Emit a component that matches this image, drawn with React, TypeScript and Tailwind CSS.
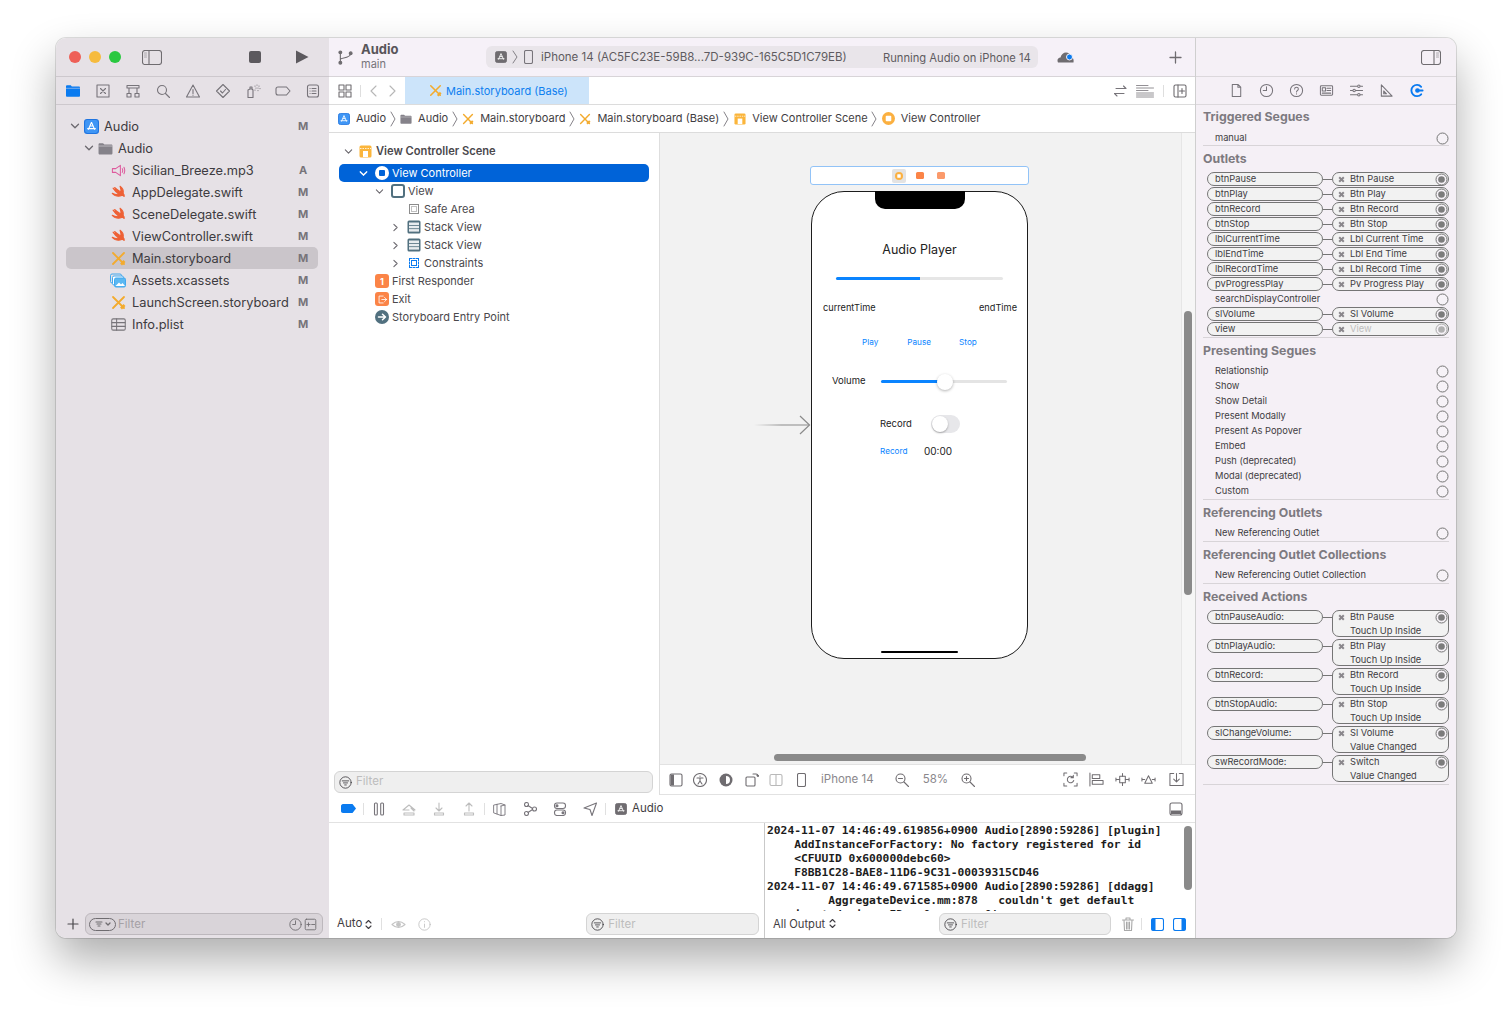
import React from 'react'

type P = { s?: number; w?: number; h?: number; c?: string; sw?: number; children?: React.ReactNode }

// stroke icon wrapper, 16 unit box unless vb is passed
const Ic = ({ s = 16, w, h, c = '#77747a', sw = 1.1, vb = '0 0 16 16', children }: P & { vb?: string }) => (
    <svg width={w ?? s} height={h ?? s} viewBox={vb} fill="none" stroke={c} strokeWidth={sw} strokeLinecap="round" strokeLinejoin="round" className="shrink-0">
        {children}
    </svg>
)

const AppIcon = ({ s = 14, gray = false }: { s?: number; gray?: boolean }) => (
    <svg width={s} height={s} viewBox="0 0 14 14" className="shrink-0">
        <rect x="0.5" y="0.5" width="13" height="13" rx="2.5" fill={gray ? '#6f6c70' : '#3f96f5'} stroke={gray ? '#6f6c70' : '#1f74e0'} />
        <path d="M7 3 L4 10 M7 3 L10 10 M3 9 H11 M5.5 6.5 H8.5" stroke="#fff" strokeWidth="1" fill="none" />
    </svg>
)
const Xib = ({ s = 15 }: { s?: number }) => (
    <svg width={s} height={s} viewBox="0 0 15 15" className="shrink-0">
        <path d="M2 2 L13 13 M13 2 L2 13" stroke="#f3ab2e" strokeWidth="1.8" strokeLinecap="round" />
        <path d="M10 13.5 L13.5 10" stroke="#f3ab2e" strokeWidth="2.6" />
    </svg>
)
const Folder = ({ s = 14, c = '#85828a' }: { s?: number; c?: string }) => (
    <svg width={s} height={s} viewBox="0 0 14 14" className="shrink-0">
        <path d="M0.5 3.2c0-.7.5-1.2 1.2-1.2h3l1.2 1.2h6.400c.7 0 1.200.5 1.200 1.200v7c0 .7-.5 1.200-1.200 1.200H1.700c-.7 0-1.200-.5-1.200-1.200z" fill={c} />
        <path d="M0.500 4.700h13" stroke="#e8e4e8" strokeWidth=".5" />
    </svg>
)
const Chev = ({ open = false, c = '#6d6a70', s = 10, sw = 1.3 }: { open?: boolean; c?: string; s?: number; sw?: number }) => (
    <Ic s={s} c={c} sw={sw} vb="0 0 10 10">
        {open ? <path d="M1.500 3.200 L5 6.800 L8.500 3.200" /> : <path d="M3.200 1.500 L6.800 5 L3.200 8.500" />}
    </Ic>
)
const Crumb = () => (
    <Ic w={6} h={18} c="#77747a" sw={0.9} vb="0 0 6 18">
        <path d="M1 2 L5 9 L1 16" />
    </Ic>
)
// swift bird, no tile behind it
const Swift = () => (
    <svg width={15} height={15} viewBox="0 0 24 24" className="shrink-0">
        <path d="M14.500 2C18.500 5 20.500 9.500 19.500 13.500C20.800 15 21.500 16.800 21 18.500C20 16.800 18.500 16.300 17 16.800C14 18.300 10 18.300 6.500 16.800C4.800 16 3.300 14.800 2 13.300C5.500 15.300 9.500 15.500 12.300 14C8.800 11.800 5.500 8.500 3.300 5C6.500 8 9.500 10 12 11.500C9.800 9.500 7.500 6.800 5.800 4C9 7 12.500 9.500 15.500 11.300C16.200 8.800 15.800 5.500 14.500 2Z" fill="#ee6136" stroke="#ee6136" strokeWidth="1.700" strokeLinejoin="round" />
    </svg>
)
const SceneIcon = ({ s = 13 }: { s?: number }) => (
    <svg width={s} height={s} viewBox="0 0 13 13" className="shrink-0">
        <rect x="0.500" y="0.500" width="12" height="12" rx="1.500" fill="#fbb53b" />
        <rect x="4" y="6" width="5" height="6" fill="#fff" />
        <path d="M1 3.500 H12" stroke="#fff" strokeWidth=".8" strokeDasharray="1.500 1" />
    </svg>
)
const VcRing = ({ s = 14, c = '#fbb040', inner = '#fff' }: { s?: number; c?: string; inner?: string }) => (
    <svg width={s} height={s} viewBox="0 0 14 14" className="shrink-0">
        <circle cx="7" cy="7" r="7" fill={c} />
        <rect x="4" y="4" width="6" height="6" rx="1" fill={inner} />
    </svg>
)
const StackIc = () => (
    <svg width={14} height={14} viewBox="0 0 14 14" className="shrink-0">
        <rect x="0.500" y="0.500" width="13" height="13" rx="1.500" fill="#51707f" />
        <rect x="2" y="2.500" width="10" height="2.500" fill="#e8ecef" />
        <rect x="2" y="5.800" width="10" height="2.500" fill="#e8ecef" />
        <rect x="2" y="9.100" width="10" height="2.500" fill="#e8ecef" />
    </svg>
)
const OrangeBox = ({ kind }: { kind: 'one' | 'exit' }) => (
    <span className="w-[14px] h-[14px] rounded-[3px] bg-[#fb8447] flex items-center justify-center shrink-0 text-white text-[9px] font-bold leading-none">
        {kind === 'one' ? '1' : (
            <Ic s={11} c="#fff" sw={1.200}>
                <path d="M9 3 H3 V13 H9 M7 8 H14 M11 5 L14 8 L11 11" />
            </Ic>
        )}
    </span>
)
const FilterGlyph = ({ s = 13, c = '#3a383c' }: { s?: number; c?: string }) => (
    <Ic s={s} c={c} sw={1}>
        <circle cx="8" cy="8" r="7" />
        <path d="M4 6 H12 M5.500 8.500 H10.500 M7 11 H9" />
    </Ic>
)

const navIcons = [
    <svg key="f" width={14} height={12} viewBox="0 0 14 12"><path d="M0 1.500C0 .7.500.2 1.200.2h3.600l1 1.300h7c.7 0 1.200.5 1.200 1.200v8c0 .7-.5 1.100-1.200 1.100H1.200C.5 11.800 0 11.400 0 10.700z" fill="#0a7bf0" /><path d="M0 3.300H14" stroke="#e6e1e6" strokeWidth=".5" /></svg>,
    <Ic key="x"><rect x="2" y="2" width="12" height="12" /><path d="M5.500 5.500 L10.500 10.500 M10.500 5.500 L5.500 10.500" /></Ic>,
    <Ic key="h"><path d="M2 2.500 H14 V5 H2 Z M4 5 V10 M12 5 V10" /><rect x="2" y="10.500" width="4" height="3.500" /><rect x="10" y="10.500" width="4" height="3.500" /></Ic>,
    <Ic key="s"><circle cx="7" cy="7" r="4.500" /><path d="M10.500 10.500 L14.500 14.500" /></Ic>,
    <Ic key="w"><path d="M8 2 L14.500 14 H1.500 Z M8 6.500 V10.500 M8 12 V12.300" /></Ic>,
    <Ic key="d"><path d="M8 1.500 L14.500 8 L8 14.500 L1.500 8 Z M5.500 8 L7.500 10 L10.500 6.500" /></Ic>,
    <Ic key="b"><path d="M3 7 L5 6 H7 L8 7 V14.500 H3 Z M5 6 V4 H7 V6" /><path d="M10 3 V3.100 M12 2 V2.100 M14 3 V3.100 M11 5 V5.100 M13 5 V5.100 M15 5.500 V5.600 M10 7 V7.100 M13 7.500 V7.600" /></Ic>,
    <Ic key="t"><path d="M3 4 H11.500 L15 8 L11.500 12 H3 C1.500 12 1 11 1 10 V6 C1 5 1.500 4 3 4 Z" /></Ic>,
    <Ic key="l"><rect x="2.500" y="2" width="11" height="12" rx="2" /><path d="M5 5.500 H5.100 M5 8 H5.100 M5 10.500 H5.100 M7 5.500 H11 M7 8 H11 M7 10.500 H11" /></Ic>,
]

const files: { name: string; st: string; ic: React.ReactNode; sel?: boolean }[] = [
    { name: 'Sicilian_Breeze.mp3', st: 'A', ic: <Ic s={15} c="#de5a9d"><path d="M1.500 6 H5 L10 2.500 V13.500 L5 10 H1.500 Z M12 6 Q13 8 12 10 M13.800 4.500 Q15.500 8 13.800 11.500" /></Ic> },
    { name: 'AppDelegate.swift', st: 'M', ic: <Swift /> },
    { name: 'SceneDelegate.swift', st: 'M', ic: <Swift /> },
    { name: 'ViewController.swift', st: 'M', ic: <Swift /> },
    { name: 'Main.storyboard', st: 'M', ic: <Xib />, sel: true },
    { name: 'Assets.xcassets', st: 'M', ic: <svg width={16} height={15} viewBox="0 0 16 15" className="shrink-0"><rect x="0.500" y="1" width="11" height="9" rx="1.500" fill="none" stroke="#41a8ee" /><rect x="2.500" y="3" width="11" height="9" rx="1.500" fill="#fff" stroke="#41a8ee" /><rect x="4.500" y="5" width="11" height="9" rx="1.500" fill="#5bb8f2" stroke="#41a8ee" /><path d="M5.500 13 L9 9.500 L11 11.500 L12.500 10 L15 13 Z" fill="#fff" /></svg> },
    { name: 'LaunchScreen.storyboard', st: 'M', ic: <Xib /> },
    { name: 'Info.plist', st: 'M', ic: <Ic s={15} c="#77747a"><rect x="0.800" y="2" width="14.400" height="12" rx="1.500" /><path d="M1 6 H15 M1 10 H15 M6 2 V14" /></Ic> },
]

const Sidebar = () => (
    <div className="w-[273px] shrink-0 bg-[#e6e1e6] flex flex-col">
        <div className="h-[39px] border-b border-[#cdc8cd] flex items-center pl-[13px] shrink-0">
            <span className="w-3 h-3 rounded-full bg-[#ee5f57]" />
            <span className="w-3 h-3 rounded-full bg-[#f6bb3e] ml-2" />
            <span className="w-3 h-3 rounded-full bg-[#2ac840] ml-2" />
            <span className="ml-[21px]">
                <Ic w={20} h={15} vb="0 0 20 15" c="#6f6c70">
                    <rect x="0.500" y="0.500" width="19" height="14" rx="2.500" />
                    <path d="M7 .5 V14.500" />
                    <path d="M2.500 3 H4.500 M2.500 5 H4.500 M2.500 7 H4.500" stroke="#a9a6aa" />
                </Ic>
            </span>
            <span className="w-3 h-3 bg-[#5c595e] rounded-[2px] ml-[87px]" />
            <svg width={14} height={14} viewBox="0 0 14 14" className="ml-[34px]"><path d="M1 .5 L13.500 7 L1 13.500 Z" fill="#5c595e" /></svg>
        </div>
        <div className="h-[28px] border-b border-[#cdc8cd] flex items-center shrink-0 pl-[2px]">
            {navIcons.map((n, i) => (
                <span key={i} className="w-[30px] flex justify-center">{n}</span>
            ))}
        </div>
        <div className="pt-[10px] pl-[10px] pr-[11px] flex-1 text-[12.800px] text-[#3d3b40]">
            <div className="h-[22px] flex items-center pl-[4px]">
                <Chev open s={10} />
                <span className="ml-[4px]"><AppIcon s={15} /></span>
                <span className="ml-[5px] flex-1 pt-[2px]">Audio</span>
                <span className="font-bold text-[11px] text-[#77747a] w-[14px] mr-[8px] text-center pt-[1px]">M</span>
            </div>
            <div className="h-[22px] flex items-center pl-[18px]">
                <Chev open s={10} />
                <span className="ml-[4px]"><Folder s={15} /></span>
                <span className="ml-[5px] flex-1 pt-[2px]">Audio</span>
            </div>
            {files.map(f => (
                <div key={f.name} className={`h-[22px] flex items-center pl-[44px] rounded-[5px] ${f.sel ? 'bg-[#cac5ca]' : ''}`}>
                    <span className="w-[16px] flex justify-center">{f.ic}</span>
                    <span className="ml-[6px] flex-1 whitespace-nowrap pt-[2px]">{f.name}</span>
                    <span className="font-bold text-[11px] text-[#77747a] w-[14px] mr-[8px] text-center">{f.st}</span>
                </div>
            ))}
        </div>
        <div className="h-[27px] flex items-center pl-[11px] pb-[1px] shrink-0">
            <Ic s={12} c="#4a484c" sw={1.200} vb="0 0 12 12"><path d="M6 1 V11 M1 6 H11" /></Ic>
            <div className="ml-[6px] w-[238px] h-[22px] bg-[#d9d4d9] border border-[#bdb8bd] rounded-[6px] flex items-center pl-[3px] pr-[5px]">
                <span className="w-[27px] h-[13px] border border-[#6f6c70] rounded-full flex items-center justify-center gap-[2px]">
                    <Ic s={8} c="#6f6c70" vb="0 0 8 8"><path d="M1 2 H7 M2 4 H6 M3 6 H5" /></Ic>
                    <Ic s={6} c="#6f6c70" sw={1.300} vb="0 0 6 6"><path d="M1 2 L3 4 L5 2" /></Ic>
                </span>
                <span className="ml-[2px] pt-[2px] flex-1 text-[11.500px] text-[#a5a1a6]">Filter</span>
                <Ic s={13} c="#6f6c70"><circle cx="8" cy="8" r="7" /><path d="M8 3.500 V8 H4.500" /></Ic>
                <span className="ml-[2px]"><Ic s={13} c="#6f6c70"><rect x="1.500" y="1.500" width="13" height="13" rx="1.500" /><path d="M3.500 8 H7.500 M5.500 6 V10 M9.500 8 H13" /></Ic></span>
            </div>
        </div>
    </div>
)

const TopBar = () => (
    <div className="h-[39px] bg-[#f6f1f8] border-b border-[#d8d4d8] flex items-center shrink-0 pl-[9px]">
        <Ic s={15} c="#6f6c70" sw={1.200}>
            <circle cx="2.500" cy="2.500" r="1.500" fill="#6f6c70" />
            <circle cx="2.500" cy="13.500" r="1.500" fill="#6f6c70" />
            <circle cx="13.500" cy="3.500" r="1.500" fill="#6f6c70" />
            <path d="M2.500 3 V13 M2.500 10 C3 8 13 9 13.500 4" />
        </Ic>
        <div className="ml-[8px] w-[125px] leading-none">
            <div className="text-[13px] font-bold text-[#58555a] leading-[14px]">Audio</div>
            <div className="text-[11px] text-[#77747a] leading-[16px]">main</div>
        </div>
        <div className="w-[552px] h-[22px] rounded-[6px] bg-[#e9e5ea] flex items-center pl-[9px] text-[11.500px] text-[#5e5b60] whitespace-nowrap">
            <AppIcon s={12} gray />
            <span className="ml-[5px]"><Ic w={6} h={14} c="#77747a" sw={0.900} vb="0 0 6 14"><path d="M1 1 L5 7 L1 13" /></Ic></span>
            <span className="ml-[6px]"><Ic w={9} h={14} c="#77747a" vb="0 0 9 14"><rect x="0.500" y="0.500" width="8" height="13" rx="1.500" /></Ic></span>
            <span className="ml-[8px] w-[342px] pt-[2px]">iPhone 14 (AC5FC23E-59B8...7D-939C-165C5D1C79EB)</span>
            <span className="pt-[2px] text-[11.200px]">Running Audio on iPhone 14</span>
        </div>
        <svg width={17} height={11} viewBox="0 0 17 11" className="ml-[19px]">
            <path d="M1 10.500C-.3 8 1 5.500 3.500 5.500 4 2.500 6.500 .5 9 .5c2.500 0 4.500 1.500 5 4.500 2 .5 3 2 2.500 5.500z" fill="#6f6c70" />
            <circle cx="12.500" cy="5" r="3" fill="#0a7bf0" stroke="#f6f1f8" />
        </svg>
        <span className="ml-[95px]"><Ic s={13} c="#6f6c70" sw={1.300} vb="0 0 13 13"><path d="M6.500 1 V12 M1 6.500 H12" /></Ic></span>
    </div>
)

const TabBar = () => (
    <div className="h-[28px] border-b border-[#dcdcdc] bg-white flex items-center shrink-0 pl-[9px]">
        <Ic s={14} c="#6f6c70" vb="0 0 14 14">
            <rect x="1" y="1" width="5" height="5" /><rect x="8" y="1" width="5" height="5" /><rect x="1" y="8" width="5" height="5" /><rect x="8" y="8" width="5" height="5" />
        </Ic>
        <span className="w-px h-[12px] bg-[#dedede] ml-[8px]" />
        <span className="ml-[7px]"><Ic s={12} c="#b7b7b7" vb="0 0 12 12"><path d="M8 1 L3 6 L8 11" /></Ic></span>
        <span className="ml-[6px]"><Ic s={12} c="#b7b7b7" vb="0 0 12 12"><path d="M4 1 L9 6 L4 11" /></Ic></span>
        <div className="ml-[7px] w-[184px] h-full bg-[#cce4fa] flex items-center pl-[24px] text-[11px] text-[#0d7ff0]">
            <Xib s={13} />
            <span className="ml-[4px] whitespace-nowrap pt-[2px]">Main.storyboard (Base)</span>
        </div>
        <div className="ml-auto flex items-center pr-[8px]">
            <Ic s={14} c="#77747a" vb="0 0 14 14"><path d="M3 4.500 H13 M10.500 2 L13 4.500 M1.500 9.500 H11 M1.500 9.500 L4 12" /></Ic>
            <span className="ml-[9px]"><Ic w={18} h={14} c="#77747a" sw={0.800} vb="0 0 18 14"><path d="M.5 1.500 H12 M.5 4 H17.500 M.5 6.500 H12 M.5 9 H17.500 M.5 11 H17.500 M.5 13 H17.500" /></Ic></span>
            <span className="w-px h-[12px] bg-[#dedede] ml-[9px]" />
            <span className="ml-[9px]"><Ic s={14} c="#6f6c70" vb="0 0 14 14"><rect x="1" y="1" width="12" height="12" rx="1.500" /><path d="M5 1 V13 M9 4.500 V9.500 M6.500 7 H11.500" /></Ic></span>
        </div>
    </div>
)

const BreadBar = () => (
    <div className="h-[28px] border-b border-[#dcdcdc] bg-white flex items-center shrink-0 pl-[9px] text-[11px] text-[#3f3d42] whitespace-nowrap">
        <AppIcon s={12} />
        <span className="ml-[6px]">Audio</span>
        <span className="ml-[4px]"><Crumb /></span>
        <span className="ml-[4px]"><Folder s={12} /></span>
        <span className="ml-[6px]">Audio</span>
        <span className="ml-[4px]"><Crumb /></span>
        <span className="ml-[4px]"><Xib s={12} /></span>
        <span className="ml-[6px]">Main.storyboard</span>
        <span className="ml-[4px]"><Crumb /></span>
        <span className="ml-[4px]"><Xib s={12} /></span>
        <span className="ml-[6px]">Main.storyboard (Base)</span>
        <span className="ml-[4px]"><Crumb /></span>
        <span className="ml-[5px]"><SceneIcon s={12} /></span>
        <span className="ml-[6px]">View Controller Scene</span>
        <span className="ml-[3px]"><Crumb /></span>
        <span className="ml-[5px]"><VcRing s={13} /></span>
        <span className="ml-[6px]">View Controller</span>
    </div>
)

const Row = ({ pl, chev, icon, text, sel }: { pl: number; chev?: 'open' | 'shut'; icon: React.ReactNode; text: string; sel?: boolean }) => (
    <div className={`h-[18px] flex items-center rounded-[5px] ${sel ? 'bg-[#0063d8] text-white' : ''}`}>
        <span style={{ width: pl }} className="shrink-0 flex justify-end pr-[4px]">
            {chev && <Chev open={chev === 'open'} s={9} c={sel ? '#fff' : '#6d6a70'} sw={sel ? 1.600 : 1.200} />}
        </span>
        <span className="w-[16px] ml-[2px] flex justify-center shrink-0">{icon}</span>
        <span className="ml-[2px] whitespace-nowrap">{text}</span>
    </div>
)

const Outline = () => (
    <div className="w-[331px] shrink-0 border-r border-[#dedede] flex flex-col bg-white">
        <div className="pt-[9px] pl-[10px] pr-[10px] text-[11px] text-[#4a484c] flex-1">
            <div className="h-[18px] flex items-center font-semibold">
                <span className="w-[9px] ml-[5px]"><Chev open s={9} /></span>
                <span className="ml-[6px]"><SceneIcon s={13} /></span>
                <span className="ml-[4px] whitespace-nowrap text-[11.150px]">View Controller Scene</span>
            </div>
            <div className="h-[4px]" />
            <Row pl={33} chev="open" icon={<VcRing s={14} c="#fff" inner="#0063d8" />} text="View Controller" sel />
            <Row pl={49} chev="open" icon={<span className="w-[14px] h-[14px] rounded-[3px] border-2 border-[#51707f] bg-white block" />} text="View" />
            <Row pl={65} icon={<span className="w-[10px] h-[10px] border border-[#8c8c8c] flex items-center justify-center"><span className="w-[6px] h-[6px] border border-[#c0c0c0] block" /></span>} text="Safe Area" />
            <Row pl={65} chev="shut" icon={<StackIc />} text="Stack View" />
            <Row pl={65} chev="shut" icon={<StackIc />} text="Stack View" />
            <Row pl={65} chev="shut" icon={<span className="w-[10px] h-[10px] border border-dashed border-[#0a7bf0] flex items-center justify-center"><span className="w-[6px] h-[6px] border border-[#0a7bf0] block" /></span>} text="Constraints" />
            <Row pl={33} icon={<OrangeBox kind="one" />} text="First Responder" />
            <Row pl={33} icon={<OrangeBox kind="exit" />} text="Exit" />
            <Row pl={33} icon={<span className="w-[14px] h-[14px] rounded-full bg-[#51707f] flex items-center justify-center"><Ic s={10} c="#fff" sw={1.500} vb="0 0 10 10"><path d="M1.500 5 H8.500 M5.500 2.200 L8.500 5 L5.500 7.800" /></Ic></span>} text="Storyboard Entry Point" />
        </div>
        <div className="h-[22px] ml-[5px] mr-[6px] mb-[2px] border border-[#d4d4d4] rounded-[6px] bg-[#efefef] flex items-center pl-[4px] shrink-0">
            <FilterGlyph />
            <span className="ml-[4px] text-[11.500px] text-[#bdbdbd]">Filter</span>
        </div>
    </div>
)

const Phone = () => (
    <div className="absolute left-[151px] top-[58px] w-[217px] h-[468px] rounded-[33px] border border-[#1c1c1c] bg-white flex flex-col text-[#222]">
        <div className="absolute left-[63px] -top-px w-[90px] h-[18px] bg-black rounded-b-[10px]" />
        <div className="absolute left-[69px] bottom-[5px] w-[77px] h-[2px] bg-black rounded-full" />
        <div className="mt-[50px] h-[16px] text-center text-[12.500px] leading-[16px]">Audio Player</div>
        <div className="mt-[19px] mx-[24px] h-[3px] bg-[#e6e6e6] rounded-full">
            <div className="w-1/2 h-full bg-[#0a84ff] rounded-l-full" />
        </div>
        <div className="mt-[22px] h-[12px] pl-[11px] pr-[10px] flex justify-between text-[9.200px] leading-[12px]">
            <span>currentTime</span>
            <span>endTime</span>
        </div>
        <div className="mt-[23px] h-[10px] text-[8.200px] leading-[10px] text-[#0a84ff] flex pl-[50px]">
            <span>Play</span>
            <span className="ml-[29px]">Pause</span>
            <span className="ml-[28px]">Stop</span>
        </div>
        <div className="mt-[28px] h-[12px] flex items-center pl-[20px] text-[9.500px]">
            <span className="w-[49px]">Volume</span>
            <div className="relative w-[126px] h-[3px] bg-[#e4e4e4] rounded-full">
                <div className="w-[57px] h-full bg-[#0a84ff] rounded-l-full" />
                <span className="absolute left-[56px] -top-[6px] w-[16px] h-[16px] rounded-full bg-white shadow-[0_1px_3px_rgba(0,0,0,0.3)]" />
            </div>
        </div>
        <div className="mt-[28px] h-[18px] flex items-center pl-[68px] text-[9.500px]">
            <span className="w-[51px]">Record</span>
            <span className="w-[29px] h-[18px] rounded-full bg-[#e7e7ea] p-[1px]">
                <span className="block w-[16px] h-[16px] rounded-full bg-white shadow-[0_1px_2px_rgba(0,0,0,0.3)]" />
            </span>
        </div>
        <div className="mt-[12px] h-[12px] flex items-center pl-[68px]">
            <span className="w-[44px] text-[8.200px] text-[#0a84ff]">Record</span>
            <span className="text-[10px]">00:00</span>
        </div>
    </div>
)

const Canvas = () => (
    <div className="flex-1 relative bg-[#f2f2f2] overflow-hidden">
        <div className="absolute right-0 top-0 bottom-0 w-[14px] bg-[#f6f6f6] border-l border-[#e6e6e6]" />
        <div className="absolute right-[3px] top-[178px] w-[8px] h-[284px] rounded-full bg-[#8a8a8a]" />
        <div className="absolute left-[114px] bottom-[3px] w-[312px] h-[7px] rounded-full bg-[#8a8a8a]" />
        <div className="absolute left-[150px] top-[33px] w-[219px] h-[19px] bg-white border border-[#92c3f7] rounded-[3px] flex items-center justify-center pr-[2px]">
            <span className="w-[14px] h-[14px] bg-[#e3e3e3] rounded-[2px] flex items-center justify-center"><VcRing s={8} /></span>
            <span className="ml-[10px] w-[8px] h-[7px] rounded-[1.500px] bg-[#fb8447]" />
            <span className="ml-[13px] w-[8px] h-[7px] rounded-[1.500px] bg-[#fb9a6b]" />
        </div>
        <Phone />
        <svg width={57} height={20} viewBox="0 0 57 20" className="absolute left-[94px] top-[282px]">
            <defs>
                <linearGradient id="arr" x1="0" x2="1" y1="0" y2="0">
                    <stop offset="0" stopColor="#8a8a8a" stopOpacity="0" />
                    <stop offset=".5" stopColor="#8a8a8a" />
                </linearGradient>
            </defs>
            <rect x="0" y="9.500" width="55" height="1" fill="url(#arr)" />
            <path d="M46 1 L55.500 10 L46 19" stroke="#8a8a8a" fill="none" strokeWidth="1.200" />
        </svg>
    </div>
)

const CanvasBar = () => (
    <div className="h-[31px] border-t border-b border-[#e2e2e2] bg-white flex items-center shrink-0 pl-[9px] text-[11.500px] text-[#8a878c]">
        <Ic s={14} c="#6f6c70" vb="0 0 14 14"><rect x="1" y="1" width="12" height="12" rx="1.500" /><rect x="1.500" y="1.500" width="3.500" height="11" fill="#6f6c70" stroke="none" /></Ic>
        <span className="ml-[10px]"><Ic s={14} c="#6f6c70" vb="0 0 14 14"><circle cx="7" cy="7" r="6.500" /><path d="M4 5 H10 M7 5 V8 M7 8 L5 11 M7 8 L9 11 M7 3 V3.200" /></Ic></span>
        <span className="ml-[12px]"><svg width={14} height={14} viewBox="0 0 14 14"><circle cx="7" cy="7" r="6.500" fill="#6f6c70" /><path d="M7 3 A4 4 0 0 1 7 11 Z" fill="#fff" /></svg></span>
        <span className="ml-[12px]"><Ic s={14} c="#6f6c70" vb="0 0 14 14"><rect x="1" y="4" width="9" height="9" rx="1" /><path d="M8 1 H11 Q13 1 13 3.500 M13 3.500 L14 2.500 M13 3.500 L12 2.500" /></Ic></span>
        <span className="ml-[10px]"><Ic s={14} c="#b9b9b9" vb="0 0 14 14"><rect x="1" y="1.500" width="12" height="11" rx="1.500" /><path d="M7 1.500 V12.500" /></Ic></span>
        <span className="ml-[14px]"><Ic w={9} h={14} c="#6f6c70" vb="0 0 9 14"><rect x="0.500" y="0.500" width="8" height="13" rx="1.500" /></Ic></span>
        <span className="ml-[15px] whitespace-nowrap">iPhone 14</span>
        <span className="ml-[21px]"><Ic s={14} c="#6f6c70" vb="0 0 14 14"><circle cx="5.500" cy="5.500" r="4.500" /><path d="M9 9 L13.500 13.500 M3.500 5.500 H7.500" /></Ic></span>
        <span className="ml-[14px]">58%</span>
        <span className="ml-[13px]"><Ic s={14} c="#6f6c70" vb="0 0 14 14"><circle cx="5.500" cy="5.500" r="4.500" /><path d="M9 9 L13.500 13.500 M3.500 5.500 H7.500 M5.500 3.500 V7.500" /></Ic></span>
        <div className="ml-auto flex items-center pr-[11px] gap-[11px]">
            <Ic s={15} c="#6f6c70"><path d="M1 4 V1 H4 M12 1 H15 V4 M15 12 V15 H12 M4 15 H1 V12 M11 6 A3.500 3.500 0 1 0 11.500 9 M11 3.500 V6 H8.500" /></Ic>
            <Ic s={15} c="#6f6c70"><path d="M1 1 V15" /><rect x="3.500" y="3" width="8" height="4" /><rect x="3.500" y="9" width="11.500" height="4" /></Ic>
            <Ic s={15} c="#6f6c70"><rect x="5" y="4.500" width="6" height="7" /><path d="M8 1.500 V4.500 M8 11.500 V14.500 M1 8 H5 M11 8 H15 M1 6.500 V9.500 M15 6.500 V9.500" /></Ic>
            <Ic s={15} c="#6f6c70"><path d="M8 4 L12 12 H4 Z M1 8 H4 M12 8 H15 M1 6.500 V9.500 M15 6.500 V9.500" /></Ic>
            <span className="ml-[2px]"><Ic s={15} c="#6f6c70"><path d="M5 1.500 H1 V14.500 H15 V1.500 H11 M8 1.500 V10 M5 7.500 L8 10.500 L11 7.500" /></Ic></span>
        </div>
    </div>
)

const DebugBar = () => (
    <div className="h-[28px] border-b border-[#e2e2e2] bg-white flex items-center shrink-0 pl-[12px] text-[11.500px] text-[#3f3d42]">
        <svg width={15} height={9} viewBox="0 0 15 9"><path d="M2 0 H11.500 L15 4.500 L11.500 9 H2 C.8 9 0 8 0 7 V2 C0 1 .8 0 2 0 Z" fill="#0a7bf0" /></svg>
        <span className="w-px h-[12px] bg-[#e0e0e0] ml-[7px]" />
        <span className="ml-[8px]"><Ic s={14} c="#77747a" vb="0 0 14 14"><rect x="2.500" y="1" width="2.800" height="12" rx="1" /><rect x="8.700" y="1" width="2.800" height="12" rx="1" /></Ic></span>
        <span className="ml-[16px]"><Ic s={14} c="#bdbdbd" vb="0 0 14 14"><path d="M1 8 L7 3 L13 8 M1 8 L7 8 M12 9 L9 6 M2 11 H12 V13 H2 Z" /></Ic></span>
        <span className="ml-[16px]"><Ic s={14} c="#bdbdbd" vb="0 0 14 14"><path d="M7 1 V9 M4 6 L7 9 L10 6 M2.500 11 H11.500 V13 H2.500 Z" /></Ic></span>
        <span className="ml-[16px]"><Ic s={14} c="#bdbdbd" vb="0 0 14 14"><path d="M7 9 V1 M4 4 L7 1 L10 4 M2.500 11 H11.500 V13 H2.500 Z" /></Ic></span>
        <span className="w-px h-[12px] bg-[#e0e0e0] ml-[8px]" />
        <span className="ml-[8px]"><Ic s={14} c="#77747a" sw={0.900} vb="0 0 14 14"><path d="M1 3 L8 1.500 L12 3 V13 L8 13.500 L1 11 Z M8 4 V13.500 M4 2.300 V11.800 M8 4 L12 3" /></Ic></span>
        <span className="ml-[16px]"><Ic s={14} c="#77747a" vb="0 0 14 14"><circle cx="3.500" cy="2.500" r="2" /><circle cx="3.500" cy="11.500" r="2" /><circle cx="11.500" cy="7" r="2" /><path d="M5 3.500 L9.500 6.500 M5 10.500 L9.500 7.500" /></Ic></span>
        <span className="ml-[16px]"><Ic s={14} c="#77747a" vb="0 0 14 14"><rect x="1.500" y="1" width="11" height="5.500" rx="2.500" /><rect x="1.500" y="8" width="11" height="5.500" rx="2.500" /><circle cx="4" cy="3.800" r="1" fill="#77747a" /><circle cx="10" cy="10.700" r="1" fill="#77747a" /></Ic></span>
        <span className="ml-[16px]"><Ic s={14} c="#77747a" vb="0 0 14 14"><path d="M13.500 1 L1 6 L7 7.500 L9 13.500 Z" /></Ic></span>
        <span className="w-px h-[12px] bg-[#e0e0e0] ml-[8px]" />
        <span className="ml-[9px]"><AppIcon s={12} gray /></span>
        <span className="ml-[5px]">Audio</span>
        <span className="ml-auto mr-[12px]"><Ic s={14} c="#6f6c70" vb="0 0 14 14"><rect x="1" y="1" width="12" height="12" rx="2" /><rect x="2" y="8.500" width="10" height="3.500" fill="#6f6c70" stroke="none" /></Ic></span>
    </div>
)

const logLines = [
    '2024-11-07 14:46:49.619856+0900 Audio[2890:59286] [plugin]',
    '    AddInstanceForFactory: No factory registered for id',
    '    <CFUUID 0x600000debc60>',
    '    F8BB1C28-BAE8-11D6-9C31-00039315CD46',
    '2024-11-07 14:46:49.671585+0900 Audio[2890:59286] [ddagg]',
    "         AggregateDevice.mm:878   couldn't get default",
]

const ConsoleArea = () => (
    <div className="h-[115px] flex shrink-0 bg-white">
        <div className="w-[436px] shrink-0 border-r border-[#c9c9c9] flex flex-col justify-end">
            <div className="h-[27px] flex items-center pl-[8px] text-[11.500px] text-[#3f3d42] pb-[1px]">
                <span>Auto</span>
                <span className="ml-[3px]"><Ic w={7} h={11} c="#3f3d42" vb="0 0 7 11"><path d="M1 4 L3.500 1.500 L6 4 M1 7 L3.500 9.500 L6 7" /></Ic></span>
                <span className="w-px h-[12px] bg-[#e0e0e0] ml-[9px]" />
                <span className="ml-[9px]"><Ic s={15} c="#c4c4c4"><path d="M1 8 Q8 1.500 15 8 Q8 14.500 1 8 Z" /><circle cx="8" cy="8" r="2" fill="#c4c4c4" /></Ic></span>
                <span className="ml-[12px]"><Ic s={13} c="#c4c4c4"><circle cx="8" cy="8" r="7" /><path d="M8 7.500 V11.500 M8 4.500 V4.700" /></Ic></span>
                <div className="ml-[155px] w-[173px] h-[22px] border border-[#d4d4d4] rounded-[6px] bg-[#efefef] flex items-center pl-[4px]">
                    <FilterGlyph />
                    <span className="ml-[4px] pt-[1px] text-[#bdbdbd]">Filter</span>
                </div>
            </div>
        </div>
        <div className="flex-1 flex flex-col relative min-w-0">
            <div className="absolute right-[3px] top-[3px] w-[8px] h-[64px] rounded-full bg-[#8a8a8a]" />
            <div className="h-[88px] pl-[2px] pt-[1px] font-bold text-[11.300px] leading-[14px] text-[#1c1c1c] whitespace-pre [font-family:'DejaVu_Sans_Mono',monospace]">
                {logLines.map((l, i) => <div key={i}>{l}</div>)}
                {/* next line is cut by the bar below, only its tops show */}
                <div className="h-[3px] overflow-hidden">{'    input device, ID = 0, err = 0!'}</div>
            </div>
            <div className="h-[27px] bg-white flex items-center pl-[8px] text-[11.500px] text-[#3f3d42] pb-[1px]">
                <span className="w-[66px] flex items-center whitespace-nowrap text-[11.200px]">
                    All Output
                    <span className="ml-[4px]"><Ic w={7} h={11} c="#3f3d42" vb="0 0 7 11"><path d="M1 4 L3.500 1.500 L6 4 M1 7 L3.500 9.500 L6 7" /></Ic></span>
                </span>
                <div className="ml-[100px] w-[172px] h-[22px] border border-[#d4d4d4] rounded-[6px] bg-[#efefef] flex items-center pl-[4px]">
                    <FilterGlyph />
                    <span className="ml-[4px] pt-[1px] text-[#bdbdbd]">Filter</span>
                </div>
                <span className="ml-[10px]"><Ic s={14} c="#a9a9a9" vb="0 0 14 14"><path d="M1.500 3 H12.500 M5 3 V1 H9 V3 M3 3 L3.500 13.500 H10.500 L11 3 M5.500 5 V12 M7 5 V12 M8.500 5 V12" /></Ic></span>
                <span className="w-px h-[12px] bg-[#e0e0e0] ml-[6px]" />
                <span className="ml-[9px]"><Ic s={13} c="#0a7bf0" vb="0 0 13 13"><rect x=".5" y=".5" width="12" height="12" rx="2" /><rect x="1" y="1" width="3.500" height="11" fill="#0a7bf0" stroke="none" /></Ic></span>
                <span className="ml-[9px]"><Ic s={13} c="#0a7bf0" vb="0 0 13 13"><rect x=".5" y=".5" width="12" height="12" rx="2" /><rect x="8.500" y="1" width="3.500" height="11" fill="#0a7bf0" stroke="none" /></Ic></span>
            </div>
        </div>
    </div>
)

const Ring = ({ on = false, dim = false }: { on?: boolean; dim?: boolean }) => (
    <svg width={13} height={13} viewBox="0 0 13 13" className="shrink-0">
        <circle cx="6.500" cy="6.500" r="5.500" fill="#f6f2f7" stroke={dim ? '#a8a8a8' : '#757575'} />
        {on && <circle cx="6.500" cy="6.500" r="3.300" fill={dim ? '#b0b0b0' : '#7c7c7c'} />}
    </svg>
)
const XMark = () => (
    <svg width={7} height={7} viewBox="0 0 7 7" className="shrink-0">
        <path d="M1.200 1.200 L5.800 5.800 M5.800 1.200 L1.200 5.800" stroke="#8a878c" strokeWidth="2" />
    </svg>
)

const Heading = ({ children }: { children: React.ReactNode }) => (
    <div className="h-[26px] flex items-center text-[12.300px] font-bold text-[#7d7a80] whitespace-nowrap pt-[1px]">{children}</div>
)
const Plain = ({ t }: { t: string }) => (
    <div className="h-[15px] flex items-center pl-[12px] pb-[1px] text-[9.300px] text-[#3f3d42] justify-between">
        <span className="whitespace-nowrap">{t}</span>
        <Ring />
    </div>
)
const Conn = ({ a, b, dim }: { a: string; b: string; dim?: boolean }) => (
    <div className="h-[15px] flex items-start text-[9.300px] text-[#3f3d42]">
        <div className="ml-[4px] w-[116px] h-[14px] rounded-full border border-[#757575] bg-[#f2f2f2] flex items-center pl-[7px] whitespace-nowrap">{a}</div>
        <div className="w-[9px] h-[1px] bg-[#757575] mt-[7px]" />
        <div className="w-[117px] h-[14px] rounded-full border border-[#757575] bg-[#f2f2f2] flex items-center pl-[5px] whitespace-nowrap">
            <XMark />
            <span className={`ml-[5px] flex-1 ${dim ? 'text-[#bdbdbd]' : ''}`}>{b}</span>
            <Ring on dim={dim} />
        </div>
    </div>
)
const Action = ({ a, b, c }: { a: string; b: string; c: string }) => (
    <div className="h-[29px] flex items-start text-[9.300px] text-[#3f3d42]">
        <div className="ml-[4px] w-[116px] h-[14px] rounded-full border border-[#757575] bg-[#f2f2f2] flex items-center pl-[7px] whitespace-nowrap">{a}</div>
        <div className="w-[9px] h-[1px] bg-[#757575] mt-[7px]" />
        <div className="w-[117px] h-[27px] rounded-[7px] border border-[#757575] bg-[#f2f2f2] pl-[5px] leading-[14px]">
            <div className="h-[12px] flex items-center">
                <XMark />
                <span className="ml-[5px] flex-1">{b}</span>
                <Ring on />
            </div>
            <div className="pl-[12px] pt-[1px] whitespace-nowrap">{c}</div>
        </div>
    </div>
)

const outlets: [string, string][] = [
    ['btnPause', 'Btn Pause'], ['btnPlay', 'Btn Play'], ['btnRecord', 'Btn Record'], ['btnStop', 'Btn Stop'],
    ['lblCurrentTime', 'Lbl Current Time'], ['lblEndTime', 'Lbl End Time'], ['lblRecordTime', 'Lbl Record Time'], ['pvProgressPlay', 'Pv Progress Play'],
]
const segues = ['Relationship', 'Show', 'Show Detail', 'Present Modally', 'Present As Popover', 'Embed', 'Push (deprecated)', 'Modal (deprecated)', 'Custom']
const actions: [string, string, string][] = [
    ['btnPauseAudio:', 'Btn Pause', 'Touch Up Inside'], ['btnPlayAudio:', 'Btn Play', 'Touch Up Inside'], ['btnRecord:', 'Btn Record', 'Touch Up Inside'],
    ['btnStopAudio:', 'Btn Stop', 'Touch Up Inside'], ['slChangeVolume:', 'Sl Volume', 'Value Changed'], ['swRecordMode:', 'Switch', 'Value Changed'],
]

const Inspector = () => (
    <div className="w-[261px] shrink-0 bg-[#f5f0f6] border-l border-[#cfcfcf] flex flex-col">
        <div className="h-[39px] border-b border-[#dcd8dc] flex items-center justify-end pr-[15px] shrink-0">
            <Ic w={20} h={15} vb="0 0 20 15" c="#6f6c70">
                <rect x="0.500" y="0.500" width="19" height="14" rx="2.500" />
                <path d="M13 .5 V14.500" />
                <path d="M15.500 3 H17.500 M15.500 5 H17.500 M15.500 7 H17.500" stroke="#a9a6aa" />
            </Ic>
        </div>
        <div className="h-[28px] border-b border-[#dcd8dc] flex items-center shrink-0 pl-[25px]">
            {[
                <path key="a" d="M3.500 1.500 H9.500 L12.500 4.500 V14.500 H3.500 Z M9.500 1.500 V4.500 H12.500" />,
                <g key="b"><circle cx="8" cy="8" r="6.500" /><path d="M8 4 V8 H4.500" /></g>,
                <g key="c"><circle cx="8" cy="8" r="6.500" /><path d="M6 6.500 C6 4 10 4 10 6.500 C10 8 8 8 8 9.500 M8 11.500 V11.700" /></g>,
                <g key="d"><rect x="1.500" y="3" width="13" height="10" rx="1" /><rect x="3.500" y="5" width="3.500" height="3.500" /><path d="M8.500 5.500 H12.500 M8.500 8 H12.500 M3.500 10.800 H12.500" /></g>,
                <g key="e"><path d="M1.500 3.500 H14.500 M1.500 8 H14.500 M1.500 12.500 H14.500" /><circle cx="10.500" cy="3.500" r="1.300" fill="#f5f0f6" /><circle cx="5.500" cy="8" r="1.300" fill="#f5f0f6" /><circle cx="10.500" cy="12.500" r="1.300" fill="#f5f0f6" /></g>,
                <path key="f" d="M2.500 2 L14 14 H2.500 Z M5 8.500 V11.500 H8 Z" />,
            ].map((g, i) => (
                <span key={i} className="w-[30px] flex justify-center"><Ic s={15} c="#77747a">{g}</Ic></span>
            ))}
            <span className="w-[30px] flex justify-center">
                <Ic s={15} c="#0a7bf0" sw={2}><path d="M13 4 A6 6 0 1 0 13 12" /><circle cx="9" cy="8" r="1.500" fill="#0a7bf0" /><path d="M9 8 H14.500" /></Ic>
            </span>
        </div>
        <div className="-mt-px pl-[7px] pr-[7px]">
            <div className="border-b border-[#d8d4d8]"><Heading>Triggered Segues</Heading><div className="pt-[1px] -mb-[1px]"><Plain t="manual" /></div></div>
            <div className="border-b border-[#d8d4d8]">
                <Heading>Outlets</Heading>
                {outlets.map(o => <Conn key={o[0]} a={o[0]} b={o[1]} />)}
                <Plain t="searchDisplayController" />
                <Conn a="slVolume" b="Sl Volume" />
                <Conn a="view" b="View" dim />
            </div>
            <div className="border-b border-[#d8d4d8]"><Heading>Presenting Segues</Heading>{segues.map(s => <Plain key={s} t={s} />)}</div>
            <div className="border-b border-[#d8d4d8]"><Heading>Referencing Outlets</Heading><Plain t="New Referencing Outlet" /></div>
            <div className="border-b border-[#d8d4d8]"><Heading>Referencing Outlet Collections</Heading><Plain t="New Referencing Outlet Collection" /></div>
            <div className="border-b border-[#d8d4d8]">
                <Heading>Received Actions</Heading>
                {actions.map(a => <Action key={a[0]} a={a[0]} b={a[1]} c={a[2]} />)}
            </div>
        </div>
    </div>
)

export default function App() {
    return (
        <div className="w-[1512px] h-[1012px] bg-white pt-[38px] pl-[56px] overflow-hidden [font-family:Inter,'Noto_Sans',sans-serif]">
            <div className="w-[1400px] h-[900px] rounded-[10px] overflow-hidden flex bg-white shadow-[0_0_0_1px_rgba(0,0,0,0.12),0_22px_45px_rgba(0,0,0,0.32)]">
                <Sidebar />
                <div className="w-[866px] shrink-0 flex flex-col">
                    <TopBar />
                    <TabBar />
                    <BreadBar />
                    <div className="h-[662px] flex shrink-0">
                        <Outline />
                        <div className="flex-1 flex flex-col min-w-0">
                            <Canvas />
                            <CanvasBar />
                        </div>
                    </div>
                    <DebugBar />
                    <ConsoleArea />
                </div>
                <Inspector />
            </div>
        </div>
    )
}
